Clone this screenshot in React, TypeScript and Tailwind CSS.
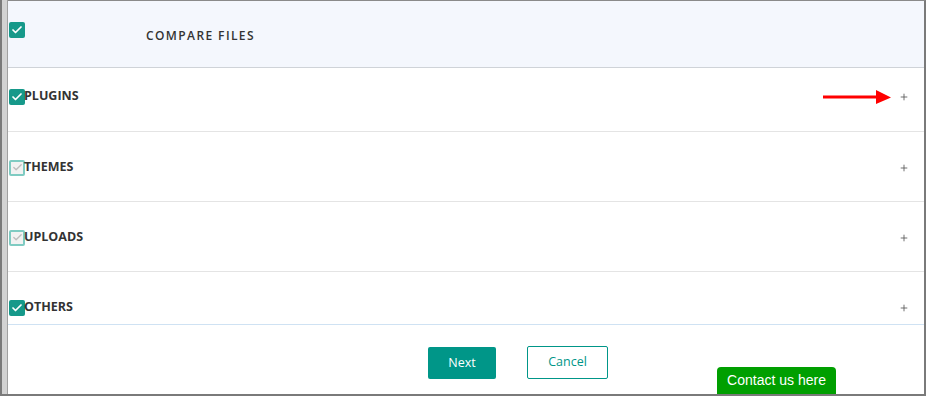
import { Check, Plus } from 'lucide-react';

interface Section {
  label: string;
  checked: boolean;
}

const SECTIONS: Section[] = [
  { label: 'PLUGINS', checked: true },
  { label: 'THEMES', checked: false },
  { label: 'UPLOADS', checked: false },
  { label: 'OTHERS', checked: true },
];

function Box({ checked }: { checked: boolean }) {
  if (checked) {
    return (
      <span className="w-[16px] h-[16px] rounded-[2px] bg-[#16998a] flex items-center justify-center shrink-0">
        <Check className="w-[12px] h-[12px] text-white" strokeWidth={3.5} />
      </span>
    );
  }
  return (
    <span className="w-[16px] h-[16px] rounded-[2px] border-2 border-[#7fcbc2] bg-[#f2f2f2] flex items-center justify-center shrink-0">
      <Check className="w-[11px] h-[11px] text-[#bdbdbd]" strokeWidth={3} />
    </span>
  );
}

export default function App() {
  return (
    <div
      className="w-[926px] h-[396px] flex flex-col bg-white overflow-hidden"
      style={{ fontFamily: '"Open Sans", "Liberation Sans", sans-serif' }}
    >
      <div className="flex flex-1 min-h-0">
        {/* left frame */}
        <div className="w-[2px] bg-[#7a7a7a]" />
        <div className="w-[5px] bg-[#d2d2d2]" />
        <div className="w-[1px] bg-[#a0a0a0]" />

        <div className="flex-1 flex flex-col border-t border-[#8a8a8a] border-r-2 border-r-[#7a7a7a] min-w-0">
          {/* header */}
          <div className="h-[67px] shrink-0 bg-[#f4f7fd] border-b border-[#cfd3d8] flex items-center pl-[1px]">
            <span className="self-start mt-[21px]">
              <Box checked />
            </span>
            <span className="ml-[121px] text-[12px] font-semibold tracking-[1.4px] text-[#333] mt-[4px]">
              COMPARE FILES
            </span>
          </div>

          {/* sections */}
          <div className="h-[257px] shrink-0 overflow-hidden border-b border-[#cfe2f3]">
            {SECTIONS.map((s, i) => (
              <div
                key={s.label}
                className={`flex items-center pl-[1px] pr-[15px] border-b border-[#e4e4e4] ${
                  i === 0 ? 'h-[64px] pb-[6px]' : 'h-[70px] pt-[2px]'
                }`}
              >
                <Box checked={s.checked} />
                <span className="text-[12.5px] font-bold text-[#333] -ml-[1px]">{s.label}</span>
                <div className="flex-1" />
                {i === 0 && (
                  <svg width="70" height="16" viewBox="0 0 70 16" className="mr-[7px]">
                    <line x1="1" y1="8" x2="56" y2="8" stroke="#ff0000" strokeWidth="3" />
                    <polygon points="54,1 69,8.5 54,15" fill="#ff0000" />
                  </svg>
                )}
                <Plus className="w-[10px] h-[10px] text-[#555]" strokeWidth={2} />
              </div>
            ))}
          </div>

          {/* footer */}
          <div className="flex-1 relative">
            <div className="flex items-start pt-[22px] pl-[420px] gap-[31px]">
              <button className="w-[68px] h-[32px] rounded-[2px] bg-[#009688] text-white text-[12.5px]">
                Next
              </button>
              <button className="w-[81px] h-[33px] -mt-[1px] rounded-[2px] border border-[#009688] text-[#009688] text-[12.5px] bg-white">
                Cancel
              </button>
            </div>
            <div
              className="absolute left-[709px] bottom-0 w-[119px] h-[27px] rounded-t-[4px] bg-[#009f00] text-white text-[14px] flex items-center justify-center"
              style={{ fontFamily: '"Liberation Sans", Arial, sans-serif' }}
            >
              Contact us here
            </div>
          </div>
        </div>
      </div>
      <div className="h-[2px] bg-[#7a7a7a]" />
    </div>
  );
}
